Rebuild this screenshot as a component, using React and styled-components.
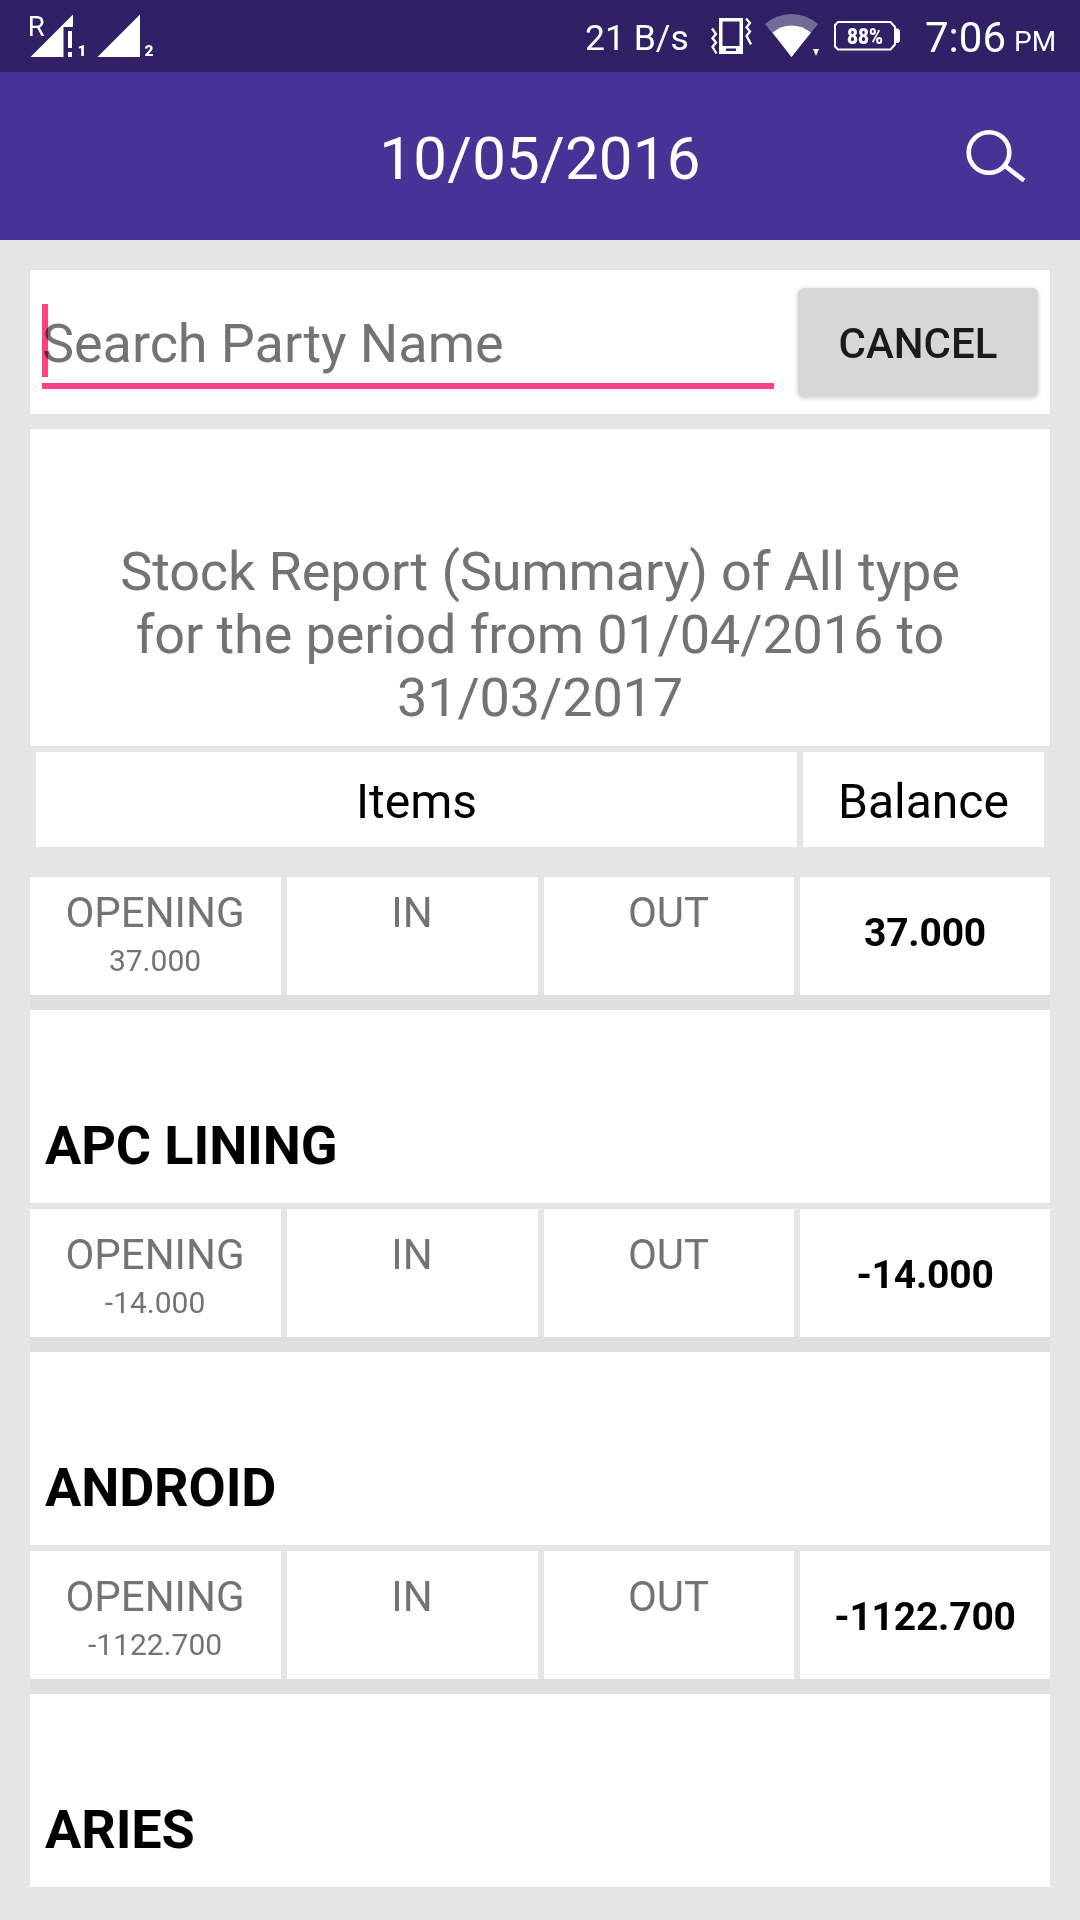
import React from "react";
import styled, { createGlobalStyle } from "styled-components";

const GlobalStyle = createGlobalStyle`
  * { box-sizing: border-box; }
  body { margin: 0; background: #e5e5e5; font-family: Roboto, "Liberation Sans", sans-serif; }
`;

const Screen = styled.div`
  width: 1080px;
  height: 1920px;
  overflow: hidden;
  background: #e5e5e5;
`;

const StatusBar = styled.header`
  display: flex;
  justify-content: space-between;
  height: 72px;
  padding: 0 20px;
  background: #2e2165;
  color: #fff;
`;

const StatusGroup = styled.div`
  display: flex;
  align-items: flex-start;
`;

const StatusText = styled.span`
  width: ${(p) => p.$width}px;
  font-size: ${(p) => p.$size}px;
  line-height: ${(p) => p.$line}px;
  white-space: nowrap;
`;

const StatusIcon = styled.svg`
  display: block;
  flex: none;
  height: 72px;
  margin-right: ${(p) => p.$gap || 0}px;
  fill: #fff;
`;

const AppBar = styled.div`
  display: grid;
  grid-template-columns: 120px 1fr 120px;
  align-items: center;
  height: 168px;
  background: #483296;
  color: #fff;
`;

const Title = styled.h1`
  grid-column: 2;
  margin: 0 0 -5px;
  font-size: 60px;
  font-weight: 400;
  letter-spacing: 0.2px;
  line-height: 70px;
  text-align: center;
`;

const SearchButton = styled.button`
  display: flex;
  height: 168px;
  padding: 0;
  border: 0;
  background: none;
`;

const Content = styled.main`
  padding: 30px 30px 0;
`;

const SearchCard = styled.section`
  display: flex;
  height: 144px;
  margin-bottom: 15px;
  padding: 17px 11px 17px 12px;
  background: #fff;
  box-shadow: 0 0 3px rgba(0, 0, 0, 0.04);
`;

const SearchField = styled.div`
  position: relative;
  width: 732px;
  height: 102px;
  margin-right: 24px;
  padding-top: 25px;
  border-bottom: 6px solid #fb4083;
  color: #737373;
  font-size: 54px;
  letter-spacing: -0.06px;
  line-height: 63px;
  white-space: nowrap;
`;

const Cursor = styled.i`
  position: absolute;
  left: 0;
  top: 17px;
  width: 6px;
  height: 73px;
  background: #ff4081;
  mix-blend-mode: multiply;
`;

const CancelButton = styled.button`
  width: 240px;
  height: 109px;
  margin-top: 1px;
  padding: 2px 0 0;
  border: 0;
  border-radius: 6px;
  background: #d6d8d7;
  box-shadow: 0 1px 5px rgba(0, 0, 0, 0.22);
  color: #1a1c1b;
  font: 500 42px/50px Roboto, "Liberation Sans", sans-serif;
`;

const ReportCard = styled.section`
  height: 317px;
  margin-bottom: 6px;
  padding: 111px 80px 0;
  background: #fff;
  box-shadow: 0 0 3px rgba(0, 0, 0, 0.04);
  color: #737373;
  font-size: 54px;
  letter-spacing: -0.12px;
  line-height: 63px;
  text-align: center;
`;

const TableHead = styled.div`
  display: grid;
  grid-template-columns: 761px 241px;
  gap: 6px;
  height: 95px;
  margin: 0 6px 30px;
`;

const HeadCell = styled.div`
  padding-top: 22px;
  background: #fff;
  color: #000;
  font-size: 48px;
  line-height: 56px;
  text-align: center;
`;

const ItemList = styled.div`
  display: flex;
  flex-direction: column;
  gap: 15px;
  background: #dfdfdf;
`;

const Item = styled.article`
  background: #e5e5e5;
`;

const ItemName = styled.h2`
  height: 193px;
  margin: 0;
  padding: 104px 15px 0;
  background: #fff;
  color: #000;
  font-size: 54px;
  font-weight: 700;
  letter-spacing: -0.12px;
  line-height: 63px;
`;

const Figures = styled.div`
  display: grid;
  grid-template-columns: 251px 251px 250px 250px;
  gap: 6px;
  height: ${(p) => (p.$first ? 118 : 128)}px;
  margin-top: ${(p) => (p.$first ? 0 : 6)}px;
`;

const Cell = styled.div`
  padding: ${(p) => (p.$first ? 11 : 21)}px 1px 0 0;
  background: #fff;
  color: #737373;
  text-align: center;
`;

const CellLabel = styled.div`
  font-size: 42px;
  line-height: 49px;
`;

const CellValue = styled.div`
  margin-top: 6px;
  font-size: 30px;
  line-height: 35px;
`;

const Balance = styled.div`
  padding-top: ${(p) => (p.$first ? 33 : 43)}px;
  background: #fff;
  color: #000;
  font-size: 39px;
  font-weight: 700;
  letter-spacing: -0.2px;
  line-height: 46px;
  text-align: center;
`;

const items = [
  { value: "37.000" },
  { name: "APC LINING", value: "-14.000" },
  { name: "ANDROID", value: "-1122.700" },
  { name: "ARIES" },
];

function Signals() {
  return (
    <StatusIcon width="140" height="72" viewBox="20 0 140 72">
      <text x="27.800" y="35.500" fontSize="27.500" fontWeight="400" fontFamily="Roboto, sans-serif" textLength="17" lengthAdjust="spacingAndGlyphs">R</text>
      <path d="M30.500 57 73 14.500V27H63.500V57Z" />
      <path d="M68 31h4v17h-4zM68 52h4v5h-4z" />
      <text x="77.500" y="56" fontSize="15.500" fontWeight="900" fontFamily="Roboto, sans-serif">1</text>
      <path d="M97.500 57 140 14.500V57Z" />
      <text x="144.500" y="56" fontSize="15.500" fontWeight="900" fontFamily="Roboto, sans-serif">2</text>
    </StatusIcon>
  );
}

function Vibrate() {
  return (
    <StatusIcon $gap={12} width="42" height="72" viewBox="711 0 42 72">
      <path fillRule="evenodd" d="M719 18h24v36h-24zM722.500 21.500v24.500h17V21.500zM726 48.500v2.500h10v-2.500z" />
      <path
        d="M746 18.500l4 4.500-3.500 4.300 3.500 4.300-3.500 4.300 4.500 8.500M712 28.500l4 5.500-3.500 4.300 3.500 4.300-3.500 4.300 4 6.600"
        fill="none"
        stroke="#fff"
        strokeWidth="2.300"
      />
    </StatusIcon>
  );
}

function Wifi() {
  return (
    <StatusIcon $gap={15} width="54" height="72" viewBox="765 0 54 72">
      <path d="M791.500 57 765 24Q777 14 791.500 14T818 24Z" opacity=".33" />
      <path d="M791.500 57 772.500 32.500Q781 25.500 791.500 25.500T811 32.500Z" />
      <path d="M813 49h6l-3 7z" />
    </StatusIcon>
  );
}

function Battery() {
  return (
    <StatusIcon $gap={24} width="67" height="72" viewBox="834 0 67 72">
      <path d="M838 22h52.500l4.500 5v17.500l-4.500 5H838l-3-3V25z" fill="none" stroke="#fff" strokeWidth="2" strokeLinejoin="round" />
      <path d="M895 28.500h3l2 2V41l-2 2h-3z" />
      <text x="847" y="44" fontSize="22.500" fontWeight="900" fontFamily="Roboto, sans-serif" textLength="36" lengthAdjust="spacingAndGlyphs">88%</text>
    </StatusIcon>
  );
}

export default function App() {
  return (
    <Screen>
      <GlobalStyle />
      <StatusBar>
        <StatusGroup>
          <Signals />
        </StatusGroup>
        <StatusGroup>
          <StatusText $width={126} $size={35.5} $line={76}>21 B/s</StatusText>
          <Vibrate />
          <Wifi />
          <Battery />
          <StatusText $width={89} $size={42} $line={76}>7:06</StatusText>
          <StatusText $width={46} $size={28} $line={84}>PM</StatusText>
        </StatusGroup>
      </StatusBar>
      <AppBar>
        <Title>10/05/2016</Title>
        <SearchButton aria-label="Search">
          <svg width="120" height="168" viewBox="960 72 120 168" fill="none" stroke="#fff" strokeWidth="4.600">
            <circle cx="989" cy="152.500" r="20.300" />
            <path d="M1004.500 165.500 1024 180.500" />
          </svg>
        </SearchButton>
      </AppBar>
      <Content>
        <SearchCard>
          <SearchField>
            <Cursor />
            Search Party Name
          </SearchField>
          <CancelButton>CANCEL</CancelButton>
        </SearchCard>
        <ReportCard>
          Stock Report (Summary) of All type for the period from 01/04/2016 to 31/03/2017
        </ReportCard>
        <TableHead>
          <HeadCell>Items</HeadCell>
          <HeadCell>Balance</HeadCell>
        </TableHead>
        <ItemList>
          {items.map(({ name, value }) => (
            <Item key={name || "first"}>
              {name && <ItemName>{name}</ItemName>}
              {value && (
                <Figures $first={!name}>
                  <Cell $first={!name}>
                    <CellLabel>OPENING</CellLabel>
                    <CellValue>{value}</CellValue>
                  </Cell>
                  <Cell $first={!name}>
                    <CellLabel>IN</CellLabel>
                  </Cell>
                  <Cell $first={!name}>
                    <CellLabel>OUT</CellLabel>
                  </Cell>
                  <Balance $first={!name}>{value}</Balance>
                </Figures>
              )}
            </Item>
          ))}
        </ItemList>
      </Content>
    </Screen>
  );
}
